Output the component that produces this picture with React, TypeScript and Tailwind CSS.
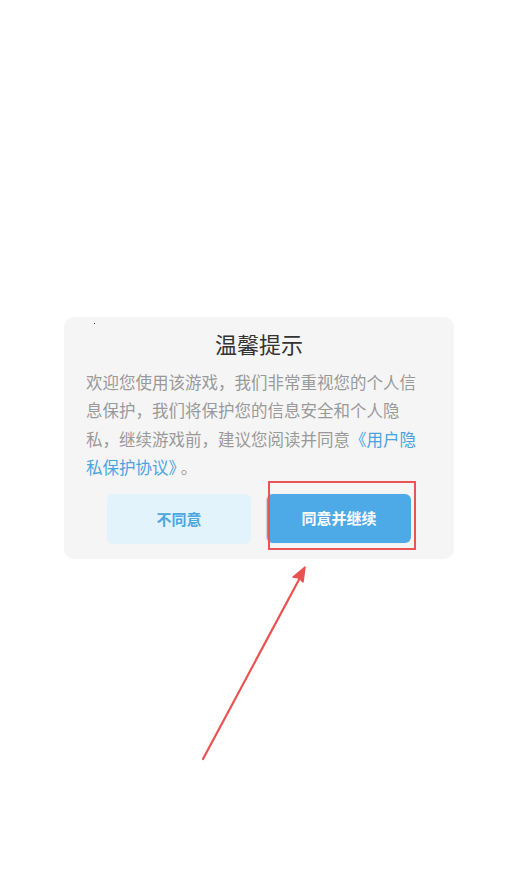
import React from "react";

export default function App() {
  const font = { fontFamily: '"Noto Sans CJK SC", "Noto Sans", sans-serif' };
  return (
    <div className="relative h-[886px] w-full overflow-hidden bg-white" style={font}>
      <div className="relative ml-[64px] mt-[317px] flex h-[242px] w-[390px] flex-col rounded-[10px] bg-[#f5f5f5]">
        <div className="absolute left-[30px] top-[6px] h-[1px] w-[1px] bg-[#333]" />
        <div className="pt-[11px] text-center text-[22px] leading-[30px] text-[#333]">温馨提示</div>
        <div className="mt-[10px] px-[22px] text-[16.5px] leading-[28.3px] text-[#999] whitespace-nowrap">
          <div>欢迎您使用该游戏，我们非常重视您的个人信</div>
          <div>息保护，我们将保护您的信息安全和个人隐</div>
          <div>
            私，继续游戏前，建议您阅读并同意<span className="text-[#4aa3df]">《用户隐</span>
          </div>
          <div>
            <span className="text-[#4aa3df]">私保护协议》</span>
            <span className="ml-[4px]">。</span>
          </div>
        </div>
        <div className="mt-[13px] flex gap-[16px] pl-[43px]">
          <div className="flex h-[50px] w-[144px] items-center justify-center rounded-[6px] bg-[#e2f3fc] text-[15px] font-bold text-[#4da6e0]">
            不同意
          </div>
          <div className="relative">
            <div className="flex h-[49px] w-[144px] items-center justify-center rounded-[6px] bg-[#4eaae6] text-[15px] font-bold text-white shadow-[-1px_0_1px_rgba(0,0,0,0.15)]">
              同意并继续
            </div>
            <div className="pointer-events-none absolute left-[1px] top-[-13px] h-[69px] w-[148px] border-2 border-[#e85555]" />
          </div>
        </div>
      </div>
      <svg className="absolute left-0 top-0" width="518" height="886" viewBox="0 0 518 886">
        <path d="M203 759 L302 574" stroke="#ea5252" strokeWidth="2.2" strokeLinecap="round" fill="none" />
        <path d="M305 567 L293 577 L299 578 L303 582 Z" fill="#ea5252" stroke="#ea5252" strokeWidth="1.5" strokeLinejoin="round" />
      </svg>
    </div>
  );
}
